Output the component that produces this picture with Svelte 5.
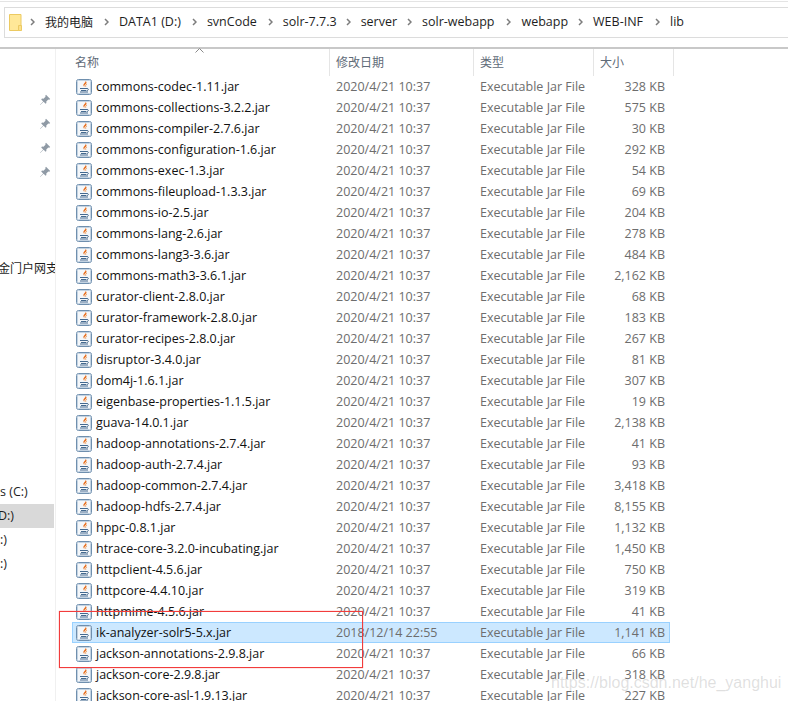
<script lang="ts">
	type Row = { name: string; date?: string; size: string; selected?: boolean };

	// gap is the space after each crumb, they are not even in the original bar
	const crumbs = [
		{ label: '我的电脑', gap: 11, cjk: true },
		{ label: 'DATA1 (D:)', gap: 11 },
		{ label: 'svnCode', gap: 11 },
		{ label: 'solr-7.7.3', gap: 9 },
		{ label: 'server', gap: 10 },
		{ label: 'solr-webapp', gap: 12 },
		{ label: 'webapp', gap: 10 },
		{ label: 'WEB-INF', gap: 12 },
		{ label: 'lib', gap: 0 }
	];

	const rows: Row[] = [
		{ name: 'commons-codec-1.11.jar', size: '328 KB' },
		{ name: 'commons-collections-3.2.2.jar', size: '575 KB' },
		{ name: 'commons-compiler-2.7.6.jar', size: '30 KB' },
		{ name: 'commons-configuration-1.6.jar', size: '292 KB' },
		{ name: 'commons-exec-1.3.jar', size: '54 KB' },
		{ name: 'commons-fileupload-1.3.3.jar', size: '69 KB' },
		{ name: 'commons-io-2.5.jar', size: '204 KB' },
		{ name: 'commons-lang-2.6.jar', size: '278 KB' },
		{ name: 'commons-lang3-3.6.jar', size: '484 KB' },
		{ name: 'commons-math3-3.6.1.jar', size: '2,162 KB' },
		{ name: 'curator-client-2.8.0.jar', size: '68 KB' },
		{ name: 'curator-framework-2.8.0.jar', size: '183 KB' },
		{ name: 'curator-recipes-2.8.0.jar', size: '267 KB' },
		{ name: 'disruptor-3.4.0.jar', size: '81 KB' },
		{ name: 'dom4j-1.6.1.jar', size: '307 KB' },
		{ name: 'eigenbase-properties-1.1.5.jar', size: '19 KB' },
		{ name: 'guava-14.0.1.jar', size: '2,138 KB' },
		{ name: 'hadoop-annotations-2.7.4.jar', size: '41 KB' },
		{ name: 'hadoop-auth-2.7.4.jar', size: '93 KB' },
		{ name: 'hadoop-common-2.7.4.jar', size: '3,418 KB' },
		{ name: 'hadoop-hdfs-2.7.4.jar', size: '8,155 KB' },
		{ name: 'hppc-0.8.1.jar', size: '1,132 KB' },
		{ name: 'htrace-core-3.2.0-incubating.jar', size: '1,450 KB' },
		{ name: 'httpclient-4.5.6.jar', size: '750 KB' },
		{ name: 'httpcore-4.4.10.jar', size: '319 KB' },
		{ name: 'httpmime-4.5.6.jar', size: '41 KB' },
		{ name: 'ik-analyzer-solr5-5.x.jar', date: '2018/12/14 22:55', size: '1,141 KB', selected: true },
		{ name: 'jackson-annotations-2.9.8.jar', size: '66 KB' },
		{ name: 'jackson-core-2.9.8.jar', size: '318 KB' },
		{ name: 'jackson-core-asl-1.9.13.jar', size: '227 KB' }
	];
</script>

<div class="window">
	<div class="topline"></div>
	<div class="address">
		<svg class="folder" width="13" height="17" viewBox="0 0 13 17">
			<path d="M.5.5h11.500v16H.5z" fill="#ffe898" stroke="#ecca62" />
			<path d="M9.500 16.500v-5h3v5z" fill="#fbe08a" stroke="#ecca62" />
		</svg>
		{#each crumbs as crumb}
			<svg class="chevron" width="5" height="8" viewBox="0 0 5 8"><path d="M1 1l3 3-3 3" fill="none" stroke="#7d7d7d" stroke-width="1.500" /></svg>
			<span class="crumb" class:cjk={crumb.cjk} style="margin-right: {crumb.gap}px">{crumb.label}</span>
		{/each}
	</div>

	<div class="body">
		<nav class="nav">
			{#each [0, 1, 2, 3] as pin}
				<div class="pin-row" data-pin={pin}>
					<svg width="12" height="12" viewBox="0 0 12 12">
						<path d="M7 .8l4.200 4.200-1 .7-.9-.2-2 2 .1 1.500-.8.8-2-2L1.200 11 1 10.800l3.200-3.400-2-2 .8-.8 1.500.1 2-2-.2-.9z" fill="#8f9aa5" />
					</svg>
				</div>
			{/each}
			<div class="nav-text portal">金门户网支</div>
			<div class="nav-text drive first">s (C:)</div>
			<div class="nav-text drive active"><span class="cut">D:)</span></div>
			<div class="nav-text drive">:)</div>
			<div class="nav-text drive">:)</div>
		</nav>

		<section class="list">
			<svg class="sort" width="9" height="5" viewBox="0 0 9 5"><path d="M.5 4.500l4-4 4 4" fill="none" stroke="#8a8a8a" /></svg>
			<header class="head">
				<div class="col name">名称</div>
				<div class="col date">修改日期</div>
				<div class="col type">类型</div>
				<div class="col size">大小</div>
			</header>
			<div class="rows">
				{#each rows as row}
					<div class="row" class:selected={row.selected}>
						<div class="cell name">
							<svg class="jar" width="16" height="16" viewBox="0 0 16 16">
								<rect x=".5" y=".5" width="15" height="15" rx="2" fill="#dfe8f1" stroke="#6f8fae" />
								<rect x="1.500" y="1.500" width="13" height="13" rx="1" fill="#f4f7fa" stroke="#c3d3e2" />
								<path d="M9.500 1.800c.8 1.800-2.800 2.800-2 5 .2.600.6 1 1 1.200-.8-1.400.4-2.200 1.400-3 .9-.8 1-2-.4-3.200z" fill="#e86f1e" />
								<path d="M11 5.200c-1.200.5-1.800 1.300-1.200 2.600" fill="none" stroke="#f2a25e" />
								<path d="M4 9.500h7M5 11.500h5M4 13h8" stroke="#44698f" fill="none" />
								<path d="M11 9.500c2 0 1.800 2-.5 2.200" stroke="#44698f" fill="none" />
							</svg>
							<span>{row.name}</span>
						</div>
						<div class="cell date">{row.date ?? '2020/4/21 10:37'}</div>
						<div class="cell type">Executable Jar File</div>
						<div class="cell size">{row.size}</div>
					</div>
				{/each}
			</div>
		</section>
	</div>

	<div class="mark"></div>
	<div class="watermark">https://blog.csdn.net/he_yanghui</div>
</div>

<style>
	:global(body) {
		margin: 0;
		background: #fff;
	}

	.window {
		position: relative;
		width: 788px;
		height: 701px;
		overflow: hidden;
		background: #fff;
		font-family: 'Open Sans', 'Noto Sans CJK SC', sans-serif;
		font-size: 12px;
		color: #1e1e1e;
	}

	.topline {
		height: 1px;
		margin-top: 1px;
		background: #e4e4e4;
	}

	.address {
		display: flex;
		align-items: center;
		box-sizing: border-box;
		height: 31px;
		margin: 5px 0 0 4px;
		padding: 0 0 2px 4px;
		border: 1px solid #dcdcdc;
		border-right: none;
		font-size: 12.500px;
	}

	.folder {
		margin: 2px 8px 0 0;
	}

	.chevron {
		margin-right: 10px;
	}

	.crumb.cjk {
		font-size: 12px;
	}

	.body {
		display: flex;
		margin-top: 9px;
		border-top: 2px solid #c8c8c8;
	}

	.nav {
		flex: none;
		width: 56px;
		height: 652px;
		box-sizing: border-box;
		padding-top: 39px;
		border-right: 1px solid #f0f0f0;
		overflow: hidden;
	}

	.pin-row {
		display: flex;
		justify-content: flex-end;
		align-items: center;
		height: 24px;
		padding-right: 4px;
	}

	.nav-text {
		height: 24px;
		line-height: 24px;
		white-space: nowrap;
		font-size: 12.500px;
	}

	.portal {
		margin-top: 72px;
		font-family: 'Noto Sans CJK SC', sans-serif;
		font-size: 12px;
		text-indent: -2px;
		width: 55px;
		overflow: hidden;
	}

	.drive.first {
		margin-top: 200px;
	}

	.active {
		width: 54px;
		background: #d9d9d9;
	}

	.cut {
		margin-left: -2px;
	}

	.list {
		position: relative;
		flex: 1;
		min-width: 0;
	}

	.sort {
		position: absolute;
		left: 139px;
		top: -1px;
	}

	.head {
		display: flex;
		height: 27px;
		color: #5f6b78;
		font-family: 'Noto Sans CJK SC', sans-serif;
		font-size: 12px;
	}

	.col {
		box-sizing: border-box;
		line-height: 25px;
		border-right: 1px solid #e5e5e5;
	}

	.col.name {
		width: 274px;
		padding-left: 19px;
	}

	.col.date {
		width: 144px;
		padding-left: 6px;
	}

	.col.type {
		width: 120px;
		padding-left: 6px;
	}

	.col.size {
		width: 80px;
		padding-left: 6px;
	}

	.rows {
		padding-left: 16px;
	}

	.row {
		display: flex;
		box-sizing: border-box;
		width: 598px;
		height: 21px;
		border: 1px solid transparent;
		line-height: 19px;
	}

	.row.selected {
		background: #cce8ff;
		border-color: #99d1ff;
	}

	.cell {
		white-space: nowrap;
	}

	.cell.name {
		display: flex;
		align-items: center;
		gap: 4px;
		width: 256px;
		padding-left: 3px;
		box-sizing: border-box;
		color: #111;
		font-size: 12.500px;
	}

	.cell.date,
	.cell.type,
	.cell.size {
		color: #6d6d6d;
		font-size: 12.500px;
	}

	.cell.date,
	.cell.type {
		padding-left: 7px;
		box-sizing: border-box;
	}

	.cell.date {
		width: 144px;
	}

	.cell.type {
		width: 120px;
	}

	.cell.size {
		width: 72px;
		text-align: right;
	}

	.mark {
		position: absolute;
		left: 59px;
		top: 611px;
		width: 302px;
		height: 55px;
		border: 1px solid #f23c3c;
		box-shadow: 0 0 1px rgba(240, 60, 60, 0.7);
	}

	.watermark {
		position: absolute;
		left: 551px;
		top: 674px;
		font-family: 'Liberation Sans', sans-serif;
		font-size: 16px;
		color: rgba(130, 130, 130, 0.25);
		white-space: nowrap;
	}
</style>
